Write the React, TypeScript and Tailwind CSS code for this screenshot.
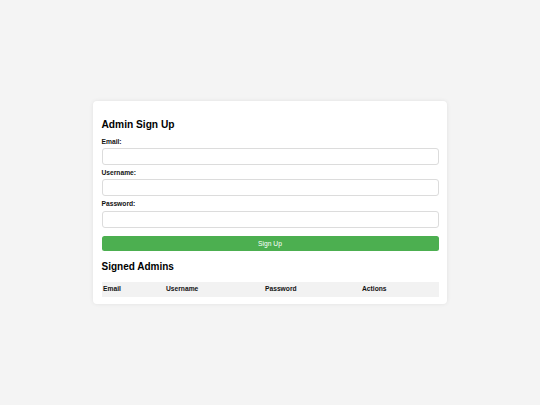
import React, { useState } from 'react';

// ── Types ────────────────────────────────────────────────────────────────────

type Admin = { email: string; username: string };

// ── Field ────────────────────────────────────────────────────────────────────

const Field = ({
  label,
  type,
  value,
  onChange,
  last,
}: {
  label: string;
  type: string;
  value: string;
  onChange: (v: string) => void;
  last?: boolean;
}) => (
  <div className={last ? '' : 'mb-[3.9px]'}>
    <label className="block text-[6.7px] leading-[8px] font-bold text-[#111] mb-[2.3px]">
      {label}
    </label>
    <input
      type={type}
      value={value}
      onChange={(e) => onChange(e.target.value)}
      className="block w-full h-[17px] border border-[#dcdcdc] rounded-[3px] bg-white px-1 text-[6.7px] outline-none"
    />
  </div>
);

// ── App ──────────────────────────────────────────────────────────────────────

export default function App() {
  const [email, setEmail] = useState('');
  const [username, setUsername] = useState('');
  const [password, setPassword] = useState('');
  const [admins, setAdmins] = useState<Admin[]>([]);

  const signUp = () => {
    if (!email || !username) return;
    setAdmins((prev) => [...prev, { email, username }]);
    setEmail('');
    setUsername('');
    setPassword('');
  };

  return (
    <div
      className="min-h-screen w-full bg-[#f4f4f4] flex items-center justify-center"
      style={{ fontFamily: '"Liberation Sans", Arial, sans-serif' }}
    >
      <div className="w-[354px] bg-white rounded-[4px] shadow-[0_0_4px_rgba(0,0,0,0.08)] px-[8.5px] pt-[17.5px] pb-[7px]">
        <h2 className="text-[10.2px] leading-[12px] font-bold text-black mb-[7.2px]">
          Admin Sign Up
        </h2>

        <Field label="Email:" type="email" value={email} onChange={setEmail} />
        <Field label="Username:" type="text" value={username} onChange={setUsername} />
        <Field label="Password:" type="password" value={password} onChange={setPassword} last />

        <button
          onClick={signUp}
          className="mt-[8.3px] w-full h-[15px] bg-[#4caf50] rounded-[2.5px] text-white text-[6.7px] leading-[15px]"
        >
          Sign Up
        </button>

        <h2 className="mt-[8.2px] text-[10px] leading-[12px] font-bold text-black mb-[8.8px]">
          Signed Admins
        </h2>

        <table className="w-full border-collapse table-fixed">
          <thead>
            <tr className="bg-[#f2f2f2] h-[15px]">
              <th className="w-[63px] text-left font-bold text-[6.7px] text-[#111] px-[1.5px]">Email</th>
              <th className="w-[99px] text-left font-bold text-[6.7px] text-[#111] px-[1.5px]">Username</th>
              <th className="w-[97px] text-left font-bold text-[6.7px] text-[#111] px-[1.5px]">Password</th>
              <th className="text-left font-bold text-[6.7px] text-[#111] px-[1.5px]">Actions</th>
            </tr>
          </thead>
          <tbody>
            {admins.map((a, i) => (
              <tr key={i} className="h-[15px] border-b border-[#eee]">
                <td className="text-[6.7px] px-[1.5px]">{a.email}</td>
                <td className="text-[6.7px] px-[1.5px]">{a.username}</td>
                <td className="text-[6.7px] px-[1.5px]">••••••</td>
                <td className="text-[6.7px] px-[1.5px]">
                  <button
                    onClick={() => setAdmins((prev) => prev.filter((_, j) => j !== i))}
                    className="text-[#e53935]"
                  >
                    Delete
                  </button>
                </td>
              </tr>
            ))}
          </tbody>
        </table>
      </div>
    </div>
  );
}
